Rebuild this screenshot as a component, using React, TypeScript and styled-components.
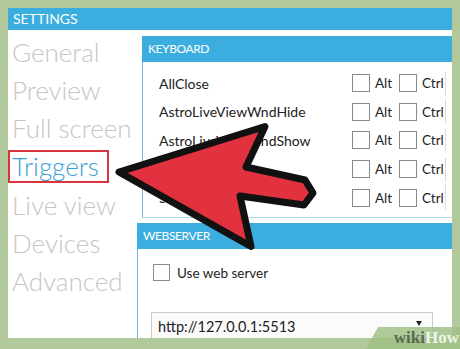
import React from 'react';
import styled, { createGlobalStyle } from 'styled-components';

const Global = createGlobalStyle`
  html, body { margin: 0; padding: 0; }
  body {
    width: 460px;
    height: 349px;
    overflow: hidden;
    background: #b2ca9b;
    font-family: Lato, "Open Sans", sans-serif;
  }
`;

const BLUE = '#3badde';

const Stage = styled.div`
  position: relative;
  width: 460px;
  height: 349px;
  padding: 8px 8px 0 8px;
  box-sizing: border-box;
`;

const Window = styled.div`
  width: 444px;
  height: 330px;
  background: #fff;
  display: flex;
  flex-direction: column;
  overflow: hidden;
`;

const TitleBar = styled.div`
  height: 22px;
  flex-shrink: 0;
  background: ${BLUE};
  color: #fff;
  font-size: 14px;
  line-height: 22px;
  padding-left: 5px;
`;

const Body = styled.div`
  flex: 1;
  display: flex;
  min-height: 0;
`;

const Sidebar = styled.div`
  width: 129px;
  flex-shrink: 0;
  padding: 3px 0 0 4px;
  box-sizing: border-box;
`;

const NavItem = styled.div<{ $active?: boolean }>`
  height: 38.2px;
  display: flex;
  align-items: center;
  font-size: 26px;
  font-weight: 300;
  color: ${(p) => (p.$active ? '#3a9fd4' : '#c6c6c6')};
  white-space: nowrap;
`;

const Highlight = styled.span`
  margin-left: -4px;
  padding: 0 8px 0 2px;
  border: 2px solid #d8343d;
  line-height: 29px;
`;

const Content = styled.div`
  flex: 1;
  display: flex;
  flex-direction: column;
  padding-top: 6px;
  min-width: 0;
`;

const Panel = styled.div<{ $inset?: number; $height?: number; $gap?: number }>`
  margin-left: ${(p) => p.$inset ?? 0}px;
  margin-top: ${(p) => p.$gap ?? 0}px;
  ${(p) => (p.$height ? `height: ${p.$height}px; flex-shrink: 0;` : 'flex: 1;')}
  display: flex;
  flex-direction: column;
`;

const PanelHeader = styled.div`
  height: 26px;
  flex-shrink: 0;
  background: ${BLUE};
  color: #fff;
  font-size: 12px;
  letter-spacing: -0.4px;
  line-height: 26px;
  padding-left: 6px;
`;

const PanelBody = styled.div<{ $bottom?: boolean }>`
  flex: 1;
  border-left: 1px solid #6fb8de;
  ${(p) => (p.$bottom ? 'border-bottom: 1px solid #b9d3e2;' : '')}
  box-sizing: border-box;
`;

const KeyList = styled.div`
  padding: 7px 4px 0 16px;
`;

const KeyRow = styled.div`
  height: 28.6px;
  display: flex;
  align-items: center;
  font-size: 14px;
  color: #222;
`;

const KeyName = styled.div`
  flex: 1;
  white-space: nowrap;
  overflow: hidden;
`;

const Box = styled.div<{ $size?: number }>`
  width: ${(p) => p.$size ?? 17}px;
  height: ${(p) => p.$size ?? 17}px;
  border: 1px solid #8a8a8a;
  box-sizing: border-box;
  background: #fff;
  flex-shrink: 0;
`;

const BoxLabel = styled.span<{ $w: number }>`
  width: ${(p) => p.$w}px;
  padding-left: 5px;
  box-sizing: border-box;
  font-size: 13.5px;
  color: #222;
`;

const RowEdge = styled.div`
  width: 2px;
  height: 25px;
  border-left: 1px solid #dcdcdc;
`;

const WebBody = styled.div`
  padding: 15px 0 0 15px;
`;

const CheckLine = styled.label`
  display: flex;
  align-items: center;
  gap: 7px;
  font-size: 13.5px;
  color: #222;
`;

const Select = styled.div`
  margin: 31px 0 0 -2px;
  width: 282px;
  height: 28px;
  border: 1px solid #cacaca;
  background: #fbfbfb;
  box-sizing: border-box;
  display: flex;
  align-items: center;
  justify-content: space-between;
  padding: 0 10px 0 6px;
  font-size: 14.5px;
  color: #222;
`;

const Caret = styled.span`
  width: 0;
  height: 0;
  margin-top: -6px;
  border-left: 3.5px solid transparent;
  border-right: 3.5px solid transparent;
  border-top: 5px solid #222;
`;

const ArrowLayer = styled.svg`
  position: absolute;
  left: 0;
  top: 0;
  pointer-events: none;
`;

const Watermark = styled.div`
  position: absolute;
  right: 0;
  bottom: 0;
  width: 94px;
  height: 22px;
  background: rgba(160, 193, 135, 0.85);
  clip-path: polygon(12px 0, 100% 0, 100% 100%, 0 100%);
  display: flex;
  align-items: center;
  justify-content: flex-end;
  padding-right: 1px;
  box-sizing: border-box;
  font-family: "Liberation Serif", "DejaVu Serif", serif;
  font-weight: bold;
  font-size: 17px;
`;

const Wiki = styled.span`
  color: #5a6b50;
`;

const How = styled.span`
  color: #eef4e8;
`;

const nav = ['General', 'Preview', 'Full screen', 'Triggers', 'Live view', 'Devices', 'Advanced'];
const keys = ['AllClose', 'AstroLiveViewWndHide', 'AstroLiveViewWndShow', 'Capture', 'Start'];

export default function App() {
  return (
    <>
      <Global />
      <Stage>
        <Window>
          <TitleBar>SETTINGS</TitleBar>
          <Body>
            <Sidebar>
              {nav.map((n) =>
                n === 'Triggers' ? (
                  <NavItem key={n} $active>
                    <Highlight>{n}</Highlight>
                  </NavItem>
                ) : (
                  <NavItem key={n}>{n}</NavItem>
                )
              )}
            </Sidebar>
            <Content>
              <Panel $inset={5} $height={182}>
                <PanelHeader>KEYBOARD</PanelHeader>
                <PanelBody $bottom>
                  <KeyList>
                    {keys.map((k) => (
                      <KeyRow key={k}>
                        <KeyName>{k}</KeyName>
                        <Box $size={18} />
                        <BoxLabel $w={29}>Alt</BoxLabel>
                        <Box $size={18} />
                        <BoxLabel $w={28}>Ctrl</BoxLabel>
                        <RowEdge />
                      </KeyRow>
                    ))}
                  </KeyList>
                </PanelBody>
              </Panel>
              <Panel $gap={5}>
                <PanelHeader>WEBSERVER</PanelHeader>
                <PanelBody>
                  <WebBody>
                    <CheckLine>
                      <Box />
                      Use web server
                    </CheckLine>
                    <Select>
                      <span>http://127.0.0.1:5513</span>
                      <Caret />
                    </Select>
                  </WebBody>
                </PanelBody>
              </Panel>
            </Content>
          </Body>
        </Window>
        <ArrowLayer width={460} height={349} viewBox="0 0 460 349">
          <polygon
            points="119,172 265,126.5 246,167 305,180 313,193 304,205 240,196 251,246.5"
            fill="#e2323f"
            stroke="#111"
            strokeWidth={7}
            strokeLinejoin="round"
          />
        </ArrowLayer>
        <Watermark>
          <Wiki>wiki</Wiki>
          <How>How</How>
        </Watermark>
      </Stage>
    </>
  );
}
